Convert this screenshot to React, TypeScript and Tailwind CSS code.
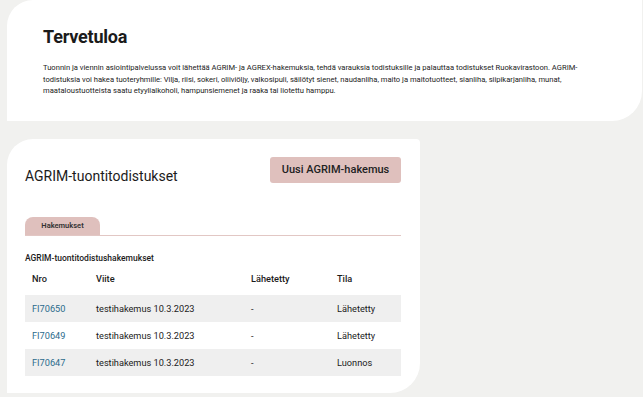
const rows = [
  { nro: "FI70650", viite: "testihakemus 10.3.2023", lahetetty: "-", tila: "Lähetetty" },
  { nro: "FI70649", viite: "testihakemus 10.3.2023", lahetetty: "-", tila: "Lähetetty" },
  { nro: "FI70647", viite: "testihakemus 10.3.2023", lahetetty: "-", tila: "Luonnos" },
];

export default function App() {
  return (
    <div className="h-[397px] w-[643px] overflow-hidden bg-[#f1f1ef] font-['Roboto',sans-serif] text-[#1b1b1b]">
      <section className="ml-[7px] mr-[1px] h-[121px] rounded-tl-[26px] rounded-br-[30px] bg-white pl-[36px] pr-[40px] pt-[25px]">
        <h1 className="text-[18px] font-bold leading-[24px] tracking-[-0.2px]">Tervetuloa</h1>
        <p className="mt-[13px] text-[7.6px] leading-[11.5px] text-[#222]">
          Tuonnin ja viennin asiointipalvelussa voit lähettää AGRIM- ja AGREX-hakemuksia, tehdä varauksia todistuksille ja palauttaa todistukset Ruokavirastoon. AGRIM-todistuksia voi hakea tuoteryhmille: Vilja, riisi, sokeri, oliiviöljy, valkosipuli, säilötyt sienet, naudanliha, maito ja maitotuotteet, sianliha, siipikarjanliha, munat, maataloustuotteista saatu etyylialkoholi, hampunsiemenet ja raaka tai liotettu hamppu.
        </p>
      </section>

      <section className="ml-[7px] mt-[18px] h-[254px] w-[413px] rounded-tl-[26px] rounded-tr-[4px] rounded-br-[30px] bg-white pl-[18px] pr-[19px] pt-[18px]">
        <div className="flex items-start justify-between">
          <h2 className="mt-[9px] text-[14px] leading-[20px] font-normal">AGRIM-tuontitodistukset</h2>
          <button className="h-[26px] w-[131px] rounded-[3px] bg-[#dfc0bd] text-[11px] font-medium text-[#222]">
            Uusi AGRIM-hakemus
          </button>
        </div>

        <div className="mt-[31px] flex border-b border-[#e2c7c4]">
          <div className="flex h-[18px] w-[75px] items-center justify-center rounded-t-[8px] bg-[#dfc0bd] text-[7.5px] font-semibold text-[#333]">
            Hakemukset
          </div>
        </div>

        <h3 className="mt-[16px] text-[8.5px] font-medium leading-[12px]">AGRIM-tuontitodistushakemukset</h3>

        <table className="mt-[2px] w-full table-fixed border-collapse text-[9.2px]">
          <thead>
            <tr className="h-[29px] text-left">
              <th className="w-[71px] pb-[3px] pl-[7px] font-medium">Nro</th>
              <th className="w-[155px] pb-[3px] font-medium">Viite</th>
              <th className="w-[86px] pb-[3px] font-medium">Lähetetty</th>
              <th className="pb-[3px] font-medium">Tila</th>
            </tr>
          </thead>
          <tbody>
            {rows.map((r, i) => (
              <tr key={r.nro} className={`h-[27px] ${i % 2 === 0 ? "bg-[#efefef]" : "bg-white"}`}>
                <td className="pl-[7px] text-[#2b6b8c]">{r.nro}</td>
                <td>{r.viite}</td>
                <td>{r.lahetetty}</td>
                <td>{r.tila}</td>
              </tr>
            ))}
          </tbody>
        </table>
      </section>
    </div>
  );
}
